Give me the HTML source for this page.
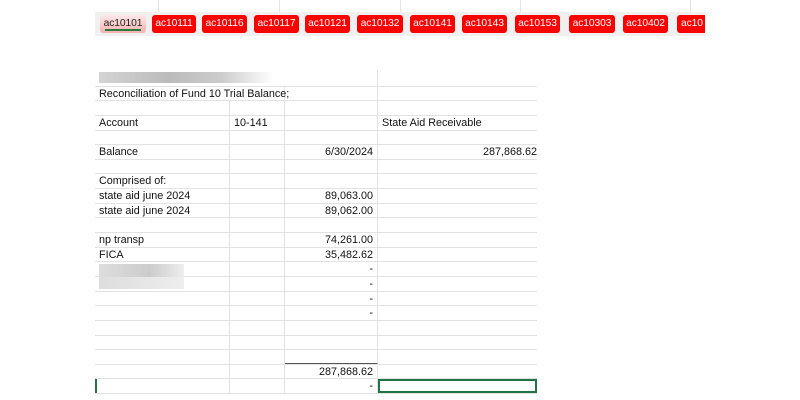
<!DOCTYPE html>
<html><head><style>
body{margin:0;width:800px;height:400px;background:#fff;position:relative;overflow:hidden;font-family:"Liberation Sans",sans-serif;}
.vl{position:absolute;top:0;height:12px;width:1px;background:#e4e4e4}
.bar{position:absolute;left:95px;top:12px;width:610px;height:24px;background:#f0f0f0}
.tab{position:absolute;top:15px;height:18px;background:#f00;color:#fff;font-size:10.3px;line-height:18px;text-align:center;border-radius:3px;letter-spacing:-0.1px}
.t0{background:linear-gradient(#fde8e8,#f4b0b0);color:#222}
.grid{position:absolute;left:95px;top:72px;width:442px}
.r{position:relative;height:14.65px;border-bottom:1px solid #e2e2e2;box-sizing:border-box;font-size:10.8px;line-height:15px;color:#111}
.c{position:absolute;top:0;height:100%;border-right:1px solid #e2e2e2;box-sizing:border-box;padding:0 4px;white-space:nowrap}
.a{left:0;width:135px}.b{left:135px;width:55px}.d{left:190px;width:93px;text-align:right}.e{left:283px;width:159px;border-right:none}
.e.rt{text-align:right;padding-right:0}
</style></head><body>
<div class="vl" style="left:158px"></div><div class="vl" style="left:279px"></div><div class="vl" style="left:400px"></div><div class="vl" style="left:520px"></div><div class="vl" style="left:690px"></div>
<div class="bar"></div>
<div class="tab t0" style="left:100px;width:46px">ac10101<div style="position:absolute;left:5px;right:5px;bottom:2px;height:2px;background:#2a7a3a"></div></div>
<div class="tab" style="left:152px;width:44px">ac10111</div>
<div class="tab" style="left:202px;width:45px">ac10116</div>
<div class="tab" style="left:254px;width:45px">ac10117</div>
<div class="tab" style="left:305px;width:45px">ac10121</div>
<div class="tab" style="left:357px;width:46px">ac10132</div>
<div class="tab" style="left:410px;width:45px">ac10141</div>
<div class="tab" style="left:462px;width:45px">ac10143</div>
<div class="tab" style="left:515px;width:45px">ac10153</div>
<div class="tab" style="left:569px;width:46px">ac10303</div>
<div class="tab" style="left:623px;width:45px">ac10402</div>
<div class="tab" style="left:677px;width:28px;border-radius:3px 0 0 3px;overflow:hidden;text-align:left;padding-left:4px;box-sizing:border-box">ac10</div>
<div class="grid">
<div class="r" style="margin-top:-2px;height:16.65px"><div class="c a" style="width:190px;border:none"><div style="margin-top:2px;height:11px;width:175px;background:linear-gradient(90deg,#d4d4d4,#bbb 40%,#ccc 70%,#fff)"></div></div><div class="c d"></div><div class="c e"></div></div>
<div class="r"><div class="c a" style="width:190px">Reconciliation of Fund 10 Trial Balance;</div><div class="c d"></div><div class="c e"></div></div>
<div class="r"><div class="c a"></div><div class="c b"></div><div class="c d"></div><div class="c e"></div></div>
<div class="r"><div class="c a">Account</div><div class="c b">10-141</div><div class="c d"></div><div class="c e">State Aid Receivable</div></div>
<div class="r"><div class="c a"></div><div class="c b"></div><div class="c d"></div><div class="c e"></div></div>
<div class="r"><div class="c a">Balance</div><div class="c b"></div><div class="c d">6/30/2024</div><div class="c e rt">287,868.62</div></div>
<div class="r"><div class="c a"></div><div class="c b"></div><div class="c d"></div><div class="c e"></div></div>
<div class="r"><div class="c a">Comprised of:</div><div class="c b"></div><div class="c d"></div><div class="c e"></div></div>
<div class="r"><div class="c a">state aid june 2024</div><div class="c b"></div><div class="c d">89,063.00</div><div class="c e"></div></div>
<div class="r"><div class="c a">state aid june 2024</div><div class="c b"></div><div class="c d">89,062.00</div><div class="c e"></div></div>
<div class="r"><div class="c a"></div><div class="c b"></div><div class="c d"></div><div class="c e"></div></div>
<div class="r"><div class="c a">np transp</div><div class="c b"></div><div class="c d">74,261.00</div><div class="c e"></div></div>
<div class="r"><div class="c a">FICA</div><div class="c b"></div><div class="c d">35,482.62</div><div class="c e"></div></div>
<div class="r"><div class="c a"><div style="margin-top:2px;height:13px;width:85px;background:linear-gradient(90deg,#ddd,#ccc 60%,#eee)"></div></div><div class="c b"></div><div class="c d">-</div><div class="c e"></div></div>
<div class="r"><div class="c a"><div style="height:12px;width:85px;background:linear-gradient(90deg,#ddd,#eee)"></div></div><div class="c b"></div><div class="c d">-</div><div class="c e"></div></div>
<div class="r"><div class="c a"></div><div class="c b"></div><div class="c d">-</div><div class="c e"></div></div>
<div class="r"><div class="c a"></div><div class="c b"></div><div class="c d">-</div><div class="c e"></div></div>
<div class="r"><div class="c a"></div><div class="c b"></div><div class="c d"></div><div class="c e"></div></div>
<div class="r"><div class="c a"></div><div class="c b"></div><div class="c d"></div><div class="c e"></div></div>
<div class="r"><div class="c a"></div><div class="c b"></div><div class="c d" style="border-bottom:1px solid #555"></div><div class="c e"></div></div>
<div class="r"><div class="c a"></div><div class="c b"></div><div class="c d">287,868.62</div><div class="c e"></div></div>
<div class="r"><div class="c a" style="border-left:2px solid #217346"></div><div class="c b"></div><div class="c d">-</div><div class="c e" style="border:2px solid #217346"></div></div>
</div>
</body></html>
